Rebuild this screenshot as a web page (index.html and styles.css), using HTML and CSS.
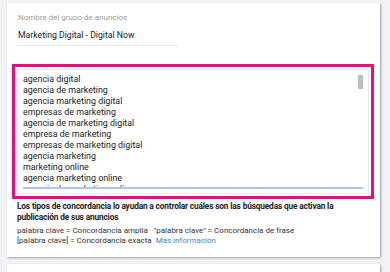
FILE: index.html
```html
<!DOCTYPE html>
<html lang="es">
<head>
<meta charset="utf-8">
<link rel="stylesheet" href="styles.css">
</head>
<body>
<div class="page">
  <div class="card">
    <div class="field">
      <div class="field-label">Nombre del grupo de anuncios</div>
      <div class="field-value">Marketing Digital - Digital Now</div>
    </div>
    <div class="highlight">
      <div class="kw-box">
        <div class="kw-list">
          <div>agencia digital</div>
          <div>agencia de marketing</div>
          <div>agencia marketing digital</div>
          <div>empresas de marketing</div>
          <div>agencia de marketing digital</div>
          <div>empresa de marketing</div>
          <div>empresas de marketing digital</div>
          <div>agencia marketing</div>
          <div>marketing online</div>
          <div>agencia marketing online</div>
          <div>agencia de marketing online</div>
        </div>
        <div class="kw-thumb"></div>
        <div class="kw-underline"></div>
      </div>
    </div>
    <div class="help">
      <p class="help-title">Los tipos de concordancia lo ayudan a controlar cuáles son las búsquedas que activan la publicación de sus anuncios</p>
      <p class="help-line">palabra clave = Concordancia amplia &nbsp;&nbsp;"palabra clave" = Concordancia de frase</p>
      <p class="help-line">[palabra clave] = Concordancia exacta &nbsp;<a class="help-link">Más información</a></p>
    </div>
  </div>
  <div class="card card-next"></div>
</div>
</body>
</html>
```
FILE: styles.css
```css
html, body {
  margin: 0;
  padding: 0;
  height: 100%;
  overflow: hidden;
}
body {
  background: #f1f2f6;
  font-family: Roboto, "Noto Sans", Arial, sans-serif;
  color: #222;
}
.page {
  padding: 3px 10px 0 7px;
  display: flex;
  flex-direction: column;
  gap: 7px;
}
.card {
  background: #fff;
  box-shadow: 1px 1px 2px rgba(0,0,0,0.35);
  height: 254px;
  box-sizing: border-box;
  padding: 9px 0 0 0;
}
.card-next {
  height: 20px;
}
.field {
  margin-left: 11px;
  width: 160px;
  border-bottom: 1px solid #e4e4e4;
  padding-bottom: 3px;
}
.field-label {
  font-size: 8px;
  color: #9b9b9b;
  line-height: 12px;
}
.field-value {
  font-size: 8.7px;
  color: #222;
  margin-top: 5px;
  line-height: 13px;
}
.highlight {
  margin: 18px 6px 0 5px;
  border: 3px solid #f0087f;
  padding: 2px;
  height: 135px;
  box-sizing: border-box;
}
.kw-box {
  position: relative;
  border: 1px solid #e7e7f0;
  height: 100%;
  box-sizing: border-box;
  padding: 4px 0 0 5px;
}
.kw-list {
  font-size: 8.9px;
  line-height: 11px;
  color: #222;
  height: 113px;
  overflow: hidden;
}
.kw-thumb {
  position: absolute;
  right: 5px;
  top: 5px;
  width: 5px;
  height: 14px;
  background: #bdbdbd;
}
.kw-underline {
  position: absolute;
  left: 5px;
  right: 5px;
  bottom: 4px;
  height: 2px;
  background: #a9c6f2;
}
.help {
  margin: 2px 0 0 10px;
}
.help p {
  margin: 0;
}
.help-title {
  font-size: 8.3px;
  font-weight: bold;
  letter-spacing: -0.15px;
  line-height: 11px;
  color: #222;
  max-width: 330px;
}
.help-line {
  font-size: 8px;
  line-height: 10px;
  color: #333;
}
.help-title + .help-line {
  margin-top: 3px;
}
.help-link {
  color: #4a7fd9;
}
```
